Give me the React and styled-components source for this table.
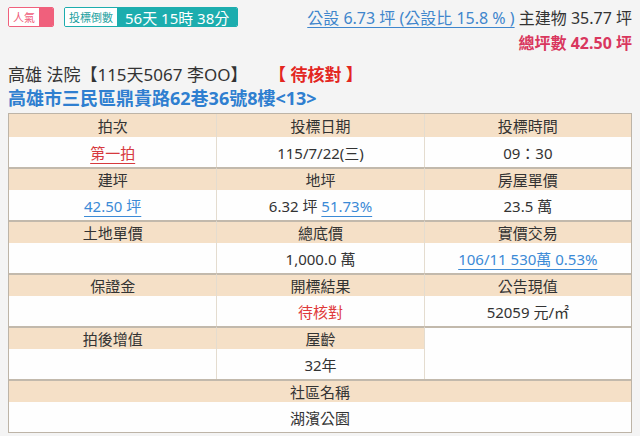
import React from 'react'
import styled, { createGlobalStyle } from 'styled-components'

const GlobalStyle = createGlobalStyle`
  html, body {
    margin: 0;
    padding: 0;
    background: #f4f4f4;
  }
  body {
    font-family: 'Noto Sans', 'Noto Sans CJK TC', sans-serif;
    color: #333;
  }
`

const Page = styled.div`
  padding: 7px 8px 0 8px;
`

const TopBar = styled.div`
  display: flex;
  justify-content: space-between;
  align-items: flex-start;
  height: 24px;
`

const Badges = styled.div`
  display: flex;
  gap: 10px;
`

const Badge = styled.div`
  display: flex;
  height: 20px;
  box-sizing: border-box;
  border: 1px solid ${(p) => p.$color};
  border-radius: 2px;
  overflow: hidden;
`

const BadgeLabel = styled.span`
  display: flex;
  align-items: center;
  padding: 0 4px;
  background: #fff;
  color: ${(p) => p.$color};
  font-size: 11px;
`

const BadgeValue = styled.span`
  display: flex;
  align-items: center;
  min-width: 14px;
  padding: 0 ${(p) => (p.$empty ? 0 : 8)}px;
  background: ${(p) => p.$color};
  color: #fff;
  font-size: 15px;
`

const AreaLine = styled.div`
  font-size: 16px;
  line-height: 20px;
  margin-top: 1px;
  white-space: nowrap;
`

const PublicLink = styled.a`
  color: #3f86cc;
  text-decoration: underline;
  text-underline-offset: 3px;
`

const TotalLine = styled.div`
  text-align: right;
  font-size: 16px;
  line-height: 20px;
  font-weight: bold;
  color: #d9375e;
  margin-top: 2px;
  height: 22px;
`

const Title = styled.div`
  font-size: 17px;
  line-height: 24px;
  margin-top: 8px;
  color: #333;
  white-space: nowrap;
`

const Status = styled.span`
  color: #e3261f;
  font-weight: bold;
  margin-left: 30px;
`

const Address = styled.div`
  font-size: 18px;
  line-height: 22px;
  font-weight: bold;
  color: #2f7fd0;
  height: 22px;
`

const Grid = styled.div`
  display: grid;
  grid-template-columns: 1fr 1fr 1fr;
  grid-template-rows: repeat(6, 23px 30px);
  border: 1px solid #bdb4a7;
  background: #fefefe;
  margin-top: 4px;
`

const Cell = styled.div`
  display: flex;
  align-items: center;
  justify-content: center;
  font-size: 15px;
  color: #333;
  background: ${(p) => (p.$head ? '#f5e0c7' : '#fefefe')};
  border-left: ${(p) => (p.$first ? 'none' : '1px solid #e4dccf')};
  border-top: ${(p) => (p.$sep ? '2px solid #c2b9ac' : 'none')};
  grid-column: ${(p) => (p.$cols ? `span ${p.$cols}` : 'auto')};
  grid-row: ${(p) => (p.$rows ? `span ${p.$rows}` : 'auto')};
`

const CellLink = styled.a`
  color: ${(p) => (p.$red ? '#d6393d' : '#3b8ad6')};
  text-decoration: underline;
  text-underline-offset: 4px;
`

const Red = styled.span`
  color: #df3a3a;
`

const groups = [
  {
    heads: ['拍次', '投標日期', '投標時間'],
    values: [
      <CellLink $red>第一拍</CellLink>,
      '115/7/22(三)',
      '09：30',
    ],
  },
  {
    heads: ['建坪', '地坪', '房屋單價'],
    values: [
      <CellLink>42.50 坪</CellLink>,
      <span>
        6.32 坪 <CellLink>51.73%</CellLink>
      </span>,
      '23.5 萬',
    ],
  },
  {
    heads: ['土地單價', '總底價', '實價交易'],
    values: ['', '1,000.0 萬', <CellLink>106/11 530萬 0.53%</CellLink>],
  },
  {
    heads: ['保證金', '開標結果', '公告現值'],
    values: ['', <Red>待核對</Red>, '52059 元/㎡'],
  },
]

export default function App() {
  return (
    <Page>
      <GlobalStyle />
      <TopBar>
        <Badges>
          <Badge $color="#f0607c">
            <BadgeLabel $color="#f0607c">人氣</BadgeLabel>
            <BadgeValue $color="#f0607c" $empty />
          </Badge>
          <Badge $color="#1cadae">
            <BadgeLabel $color="#1c9fa0">投標倒數</BadgeLabel>
            <BadgeValue $color="#1cadae">56天 15時 38分</BadgeValue>
          </Badge>
        </Badges>
        <AreaLine>
          <PublicLink>公設 6.73 坪 (公設比 15.8 % )</PublicLink> 主建物 35.77 坪
        </AreaLine>
      </TopBar>
      <TotalLine>總坪數 42.50 坪</TotalLine>
      <Title>
        高雄 法院【115天5067 李OO】<Status>【 待核對 】</Status>
      </Title>
      <Address>高雄市三民區鼎貴路62巷36號8樓&lt;13&gt;</Address>
      <Grid>
        {groups.map((g, gi) => (
          <React.Fragment key={gi}>
            {g.heads.map((h, i) => (
              <Cell key={'h' + i} $head $first={i === 0} $sep={gi > 0}>
                {h}
              </Cell>
            ))}
            {g.values.map((v, i) => (
              <Cell key={'v' + i} $first={i === 0}>
                {v}
              </Cell>
            ))}
          </React.Fragment>
        ))}
        <Cell $head $first $sep>拍後增值</Cell>
        <Cell $head $sep>屋齡</Cell>
        <Cell $sep $rows={2} />
        <Cell $first />
        <Cell>32年</Cell>
        <Cell $head $first $sep $cols={3}>社區名稱</Cell>
        <Cell $first $cols={3}>湖濱公園</Cell>
      </Grid>
    </Page>
  )
}
